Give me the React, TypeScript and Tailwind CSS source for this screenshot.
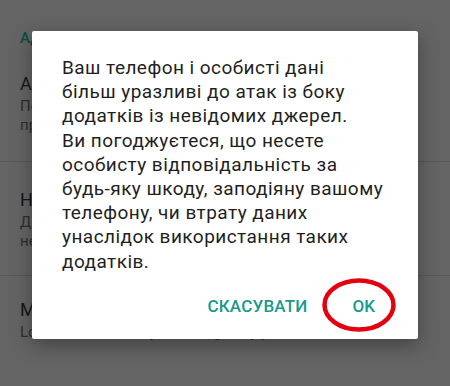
import React from 'react';

const rows = [
  {
    title: 'Адміністратори пристрою',
    summary: 'Переглянути або вимкнути адміністраторів пристрою',
    pad: 'pt-[25px] pb-[26px]',
  },
  {
    title: 'Невідомі джерела',
    summary: 'Дозволити встановлення додатків із невідомих джерел',
    pad: 'pt-[27px] pb-[24px]',
  },
  {
    title: 'Менеджер облікових даних',
    summary: 'Lock screen security is managed by you',
    pad: 'pt-[23px] pb-[24px]',
  },
];

const lines = [
  'Ваш телефон і особисті дані',
  'більш уразливі до атак із боку',
  'додатків із невідомих джерел.',
  'Ви погоджуєтеся, що несете',
  'особисту відповідальність за',
  'будь-яку шкоду, заподіяну вашому',
  'телефону, чи втрату даних',
  'унаслідок використання таких',
  'додатків.',
];

export default function App() {
  return (
    <div className="relative h-[386px] w-[450px] overflow-hidden bg-[#646464] font-['Roboto',sans-serif]">
      {/* dimmed settings list behind the dialog */}
      <div className="flex flex-col pt-[28px]">
        <p className="pl-[20px] text-[15px] font-medium leading-[20px] text-[#0f4a42]">Адміністрування пристрою</p>
        {rows.map((row, i) => (
          <div
            key={row.title}
            className={`flex flex-col pl-[20px] pr-[20px] ${row.pad} ${i < 2 ? 'border-b border-[#585858]' : ''}`}
          >
            <p className="text-[18px] leading-[22px] text-[#161616]">{row.title}</p>
            <p className="mt-[2px] w-[330px] text-[15px] leading-[19px] text-[#2e2e2e]">{row.summary}</p>
          </div>
        ))}
      </div>

      {/* dialog */}
      <div className="absolute left-[32px] top-[31px] flex h-[308px] w-[386px] flex-col rounded-[2px] bg-white shadow-[0_6px_20px_rgba(0,0,0,0.35)]">
        <p className="pl-[30px] pt-[25px] text-[19px] leading-[24.2px] tracking-[0.45px] whitespace-nowrap text-[#1f1f1f]">
          {lines.map((l, i) => (
            <React.Fragment key={i}>
              {l}
              {i < lines.length - 1 && <br />}
            </React.Fragment>
          ))}
        </p>
        <div className="mt-auto flex items-center justify-end gap-[45px] pb-[23px] pr-[43px]">
          <span className="text-[17px] font-medium leading-[20px] tracking-[0.2px] text-[#169a8b]">СКАСУВАТИ</span>
          <span className="relative text-[17px] font-medium leading-[20px] text-[#169a8b]">
            OK
            <svg
              className="absolute left-[-31px] top-[-19px]"
              width="76"
              height="56"
              viewBox="0 0 76 56"
            >
              <ellipse cx="37" cy="28" rx="34.5" ry="24.5" fill="none" stroke="#e3000f" strokeWidth="4.5" />
            </svg>
          </span>
        </div>
      </div>
    </div>
  );
}
